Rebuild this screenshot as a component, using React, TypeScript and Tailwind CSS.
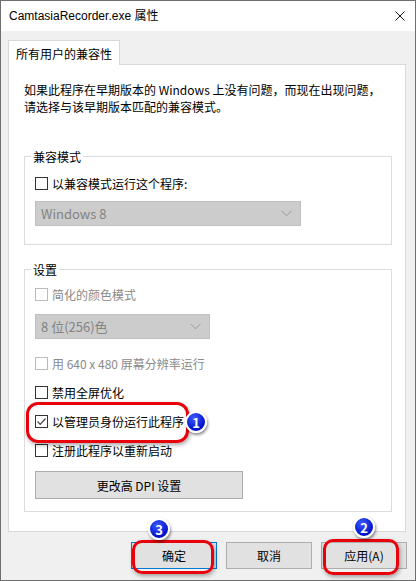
import React from "react";

const font = "font-['Noto_Sans_CJK_SC',sans-serif]";

function Check({ label, disabled, checked }: { label: string; disabled?: boolean; checked?: boolean }) {
  return (
    <div className="flex items-center gap-[4px] h-[17px]">
      <span
        className={
          "w-[13px] h-[13px] border bg-white flex items-center justify-center " +
          (disabled ? "border-[#bcbcbc]" : "border-[#333333]")
        }
      >
        {checked && (
          <svg width="11" height="11" viewBox="0 0 11 11">
            <polyline points="1.5,5.5 4.2,8.3 9.5,2.5" fill="none" stroke="#444" strokeWidth="1.2" />
          </svg>
        )}
      </span>
      <span className={disabled ? "text-[#8a8a8a]" : "text-black"}>{label}</span>
    </div>
  );
}

function Select({ value, width }: { value: string; width: string }) {
  return (
    <div className={`${width} h-[25px] bg-[#cccccc] border border-[#bfbfbf] flex items-center justify-between pl-[5px] pr-[8px]`}>
      <span className="text-[#838383] text-[13px]">{value}</span>
      <svg width="11" height="7" viewBox="0 0 11 7">
        <polyline points="0.5,0.8 5.5,5.8 10.5,0.8" fill="none" stroke="#9b9b9b" strokeWidth="1" />
      </svg>
    </div>
  );
}

function Badge({ n, className }: { n: number; className: string }) {
  return (
    <div
      className={`absolute w-[22px] h-[22px] rounded-full border-2 border-white bg-[radial-gradient(circle_at_40%_30%,#3b5cff,#0010c8_70%)] shadow-[1px_2px_3px_rgba(0,0,0,0.45)] flex items-center justify-center text-white text-[13px] font-bold leading-none ${className}`}
    >
      {n}
    </div>
  );
}

export default function App() {
  return (
    <div className={`relative w-[416px] h-[581px] border border-[#6e6e6e] bg-[#f0f0f0] flex flex-col text-[12px] leading-[17px] text-black ${font}`}>
      {/* title bar */}
      <div className="h-[30px] bg-white flex items-center justify-between pl-[8px] pr-[10px]">
        <span className="text-[12px] font-['Liberation_Sans','Noto_Sans_CJK_SC',sans-serif]">CamtasiaRecorder.exe 属性</span>
        <svg width="10" height="10" viewBox="0 0 10 10">
          <path d="M0.5 0.5 L9.5 9.5 M9.5 0.5 L0.5 9.5" stroke="#111" strokeWidth="1" />
        </svg>
      </div>

      <div className="pl-[7px] pt-[9px]">
        <div className="flex">
          <div className="w-[112px] h-[25px] -mb-px relative z-10 bg-white border border-b-0 border-[#d9d9d9] flex items-center justify-center">
            所有用户的兼容性
          </div>
        </div>
        <div className="w-[398px] h-[468px] bg-white border border-[#d9d9d9] pl-[15px] pt-[16px]">
          <p>
            如果此程序在早期版本的 Windows 上没有问题，而现在出现问题，
            <br />
            请选择与该早期版本匹配的兼容模式。
          </p>

          <fieldset className="mt-[33px] w-[368px] border border-[#dcdcdc] pl-[10px] pb-[18px]">
            <legend className="-ml-[4px] px-[2px]">兼容模式</legend>
            <div className="mt-[10px]">
              <Check label="以兼容模式运行这个程序:" />
            </div>
            <div className="mt-[9px]">
              <Select value="Windows 8" width="w-[266px]" />
            </div>
          </fieldset>

          <fieldset className="mt-[16px] w-[368px] border border-[#dcdcdc] pl-[10px] pb-[12px]">
            <legend className="-ml-[4px] px-[2px]">设置</legend>
            <div className="mt-[8px]">
              <Check label="简化的颜色模式" disabled />
            </div>
            <div className="mt-[11px]">
              <Select value="8 位(256)色" width="w-[175px]" />
            </div>
            <div className="mt-[16px]">
              <Check label="用 640 x 480 屏幕分辨率运行" disabled />
            </div>
            <div className="mt-[12px]">
              <Check label="禁用全屏优化" />
            </div>
            <div className="mt-[12px]">
              <Check label="以管理员身份运行此程序" checked />
            </div>
            <div className="mt-[12px]">
              <Check label="注册此程序以重新启动" />
            </div>
            <button className="mt-[12px] w-[208px] h-[28px] bg-[#e1e1e1] border border-[#adadad]">
              更改高 DPI 设置
            </button>
          </fieldset>
        </div>
      </div>

      {/* bottom buttons */}
      <div className="flex justify-end gap-[9px] pr-[8px] mt-[10px]">
        <button className="w-[86px] h-[27px] bg-[#e1e1e1] border border-[#0078d7]">确定</button>
        <button className="w-[86px] h-[27px] bg-[#e1e1e1] border border-[#adadad]">取消</button>
        <button className="w-[86px] h-[27px] bg-[#e1e1e1] border border-[#adadad]">应用(A)</button>
      </div>

      {/* annotations */}
      <div className="absolute left-[25px] top-[401px] w-[163px] h-[41px] rounded-[12px] border-[3px] border-[#e8000b] shadow-[1px_2px_4px_rgba(0,0,0,0.35)]" />
      <div className="absolute left-[131px] top-[539px] w-[82px] h-[34px] rounded-[10px] border-[3px] border-[#e8000b] shadow-[1px_2px_4px_rgba(0,0,0,0.35)]" />
      <div className="absolute left-[322px] top-[538px] w-[76px] h-[36px] rounded-[10px] border-[3px] border-[#e8000b] shadow-[1px_2px_4px_rgba(0,0,0,0.35)]" />
      <Badge n={1} className="left-[184px] top-[410px]" />
      <Badge n={3} className="left-[147px] top-[517px]" />
      <Badge n={2} className="left-[352px] top-[515px]" />
    </div>
  );
}
